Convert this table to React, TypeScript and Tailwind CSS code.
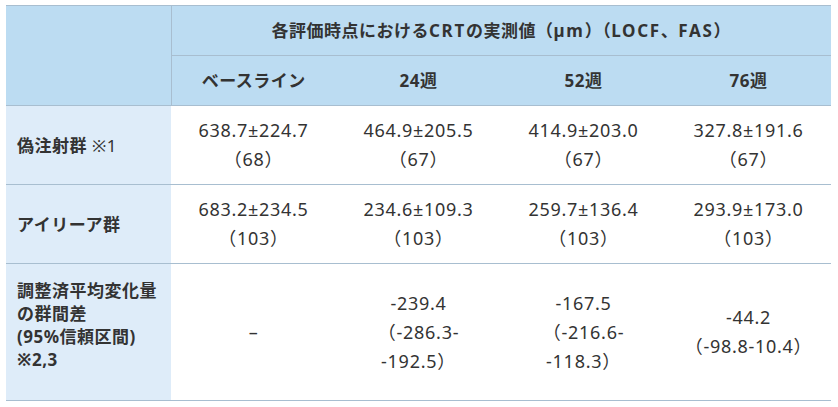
import React from 'react'

const font = "font-['Noto_Sans','Noto_Sans_CJK_JP',sans-serif]"

type Row = {
  label: React.ReactNode
  cells: string[][]
  labelClass?: string
}

const rows: Row[] = [
  {
    label: (
      <>
        偽注射群 <span className="font-normal">※1</span>
      </>
    ),
    cells: [
      ['638.7±224.7', '（68）'],
      ['464.9±205.5', '（67）'],
      ['414.9±203.0', '（67）'],
      ['327.8±191.6', '（67）'],
    ],
  },
  {
    label: 'アイリーア群',
    cells: [
      ['683.2±234.5', '（103）'],
      ['234.6±109.3', '（103）'],
      ['259.7±136.4', '（103）'],
      ['293.9±173.0', '（103）'],
    ],
  },
  {
    label: (
      <>
        調整済平均変化量
        <br />
        の群間差
        <br />
        (95%信頼区間)
        <br />
        ※2,3
      </>
    ),
    labelClass: 'align-top pt-[15px] pb-[29px]',
    cells: [
      ['–'],
      ['-239.4', '（-286.3-', '-192.5）'],
      ['-167.5', '（-216.6-', '-118.3）'],
      ['-44.2', '（-98.8-10.4）'],
    ],
  },
]

const weeks = ['ベースライン', '24週', '52週', '76週']

// 英字部分だけ少し字間を広げる
const Lat = ({ children }: { children: React.ReactNode }) => (
  <span className="tracking-[0.1em]">{children}</span>
)

export default function App() {
  return (
    <div className={`min-h-screen bg-white pt-[5px] pl-[6px] ${font}`}>
      <table className="table-fixed border-collapse w-[825px] text-[17px] tracking-[0.03em] text-[#333]">
        <colgroup>
          <col className="w-[165px]" />
          <col className="w-[165px]" />
          <col className="w-[165px]" />
          <col className="w-[165px]" />
          <col className="w-[165px]" />
        </colgroup>
        <thead>
          <tr>
            <th
              rowSpan={2}
              className="bg-[#bcdcf2] border-t border-b border-r border-[#a8bed0]"
            />
            <th
              colSpan={4}
              className="bg-[#bcdcf2] border-t border-b border-[#a8bed0] h-[50px] font-bold leading-[24px] text-center"
            >
              各評価時点における<Lat>CRT</Lat>の実測値（<Lat>µm</Lat>）（<Lat>LOCF</Lat>、<Lat>FAS</Lat>）
            </th>
          </tr>
          <tr>
            {weeks.map((w) => (
              <th
                key={w}
                className="bg-[#bcdcf2] border-b border-[#a8bed0] h-[50px] font-bold leading-[24px] text-center"
              >
                {w}
              </th>
            ))}
          </tr>
        </thead>
        <tbody>
          {rows.map((r, i) => (
            <tr key={i}>
              <th
                className={`bg-[#deecf9] border-b border-[#a8bed0] text-left font-bold leading-[23px] pl-[11px] pr-[6px] ${
                  r.labelClass ?? 'align-middle py-[10px]'
                }`}
              >
                {r.label}
              </th>
              {r.cells.map((c, j) => (
                <td
                  key={j}
                  className="border-b border-[#a8bed0] text-center align-middle text-[18px] tracking-[0.04em] leading-[29px] py-[10px] px-[12px] font-normal"
                >
                  {c.map((line, k) => (
                    <div key={k}>{line}</div>
                  ))}
                </td>
              ))}
            </tr>
          ))}
        </tbody>
      </table>
    </div>
  )
}
